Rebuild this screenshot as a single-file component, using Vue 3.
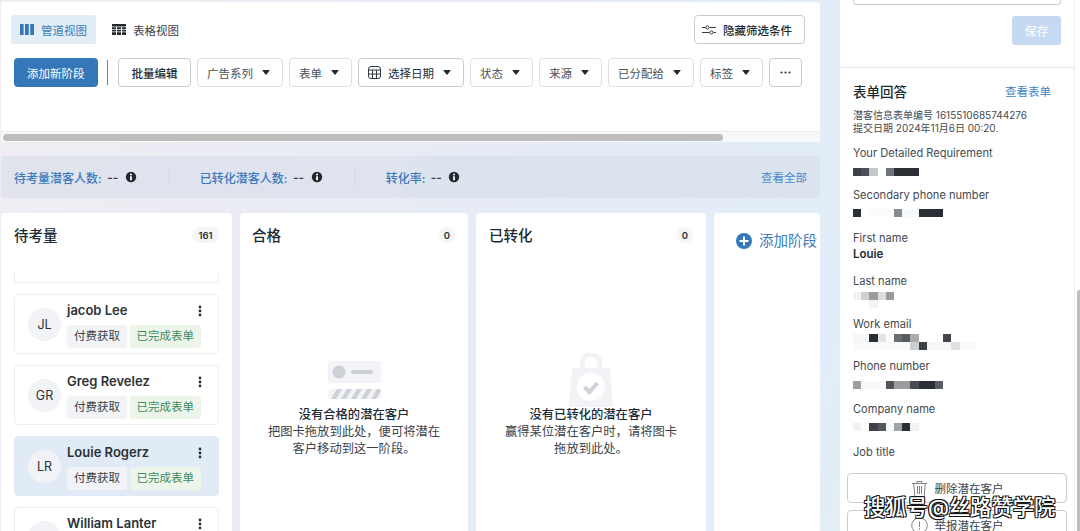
<script setup>
const filters = ["广告系列", "表单"];
const filtersAfter = ["状态", "来源", "已分配给", "标签"];
const stats = ["待考量潜客人数:", "已转化潜客人数:", "转化率:"];

const leads = [
  { initials: "JL", name: "jacob Lee" },
  { initials: "GR", name: "Greg Revelez" },
  { initials: "LR", name: "Louie Rogerz", active: true },
  { initials: "WL", name: "William Lanter" },
];

const W = "transparent";
const fields = [
  {
    label: "Your Detailed Requirement",
    gap: 7,
    rows: [[[1, "#3e4248"], [1, "#4c5056"], [1, "#c5c7ca"], [1, W], [1, "#6f7378"], [3, "#2c3035"]]],
  },
  {
    label: "Secondary phone number",
    gap: 5.5,
    rows: [[[1, "#2b3036"], [1, W], [3, "#f9fbfc"], [1, "#888b8e"], [2, "#f4fbfc"], [3, "#2a2f35"]]],
  },
  { label: "First name", text: "Louie" },
  {
    label: "Last name",
    gap: 3,
    rows: [
      [[1, "#f0f1f3"], [1, "#cfd0d2"], [1, "#9a9c9e"], [1, "#dcdddd"], [1, "#999b9d"]],
      [[2, W], [1, "#f2f3f5"]],
    ],
  },
  {
    label: "Work email",
    gap: 2,
    rows: [
      [[2, "#f6f7f8"], [1, "#2a2f35"], [1, "#e5e5e6"], [1, W], [1, "#6a6e73"], [1, "#585c61"], [1, "#aaacae"], [3, W], [1, "#43474c"]],
      [[7, "#f7f9fb"], [1, "#cccdcf"], [1, "#3c4046"], [3, "#f5f6f8"], [1, "#e0e1e2"], [2, "#f7f9fb"]],
    ],
  },
  {
    label: "Phone number",
    gap: 7,
    rows: [[[1, "#9c9ea0"], [3, "#f8f8f8"], [1, "#50545a"], [2, "#9a9ca0"], [1, "#4a4e54"], [2, "#2c3035"], [1, "#5a5e63"]]],
  },
  {
    label: "Company name",
    gap: 6,
    rows: [[[1, "#f0f2f6"], [1, W], [1, "#3e4248"], [1, "#55595e"], [1, "#f7f8f8"], [1, "#a0a2a4"], [1, "#2a2f35"], [1, "#f3f3f3"]]],
  },
  { label: "Job title" },
];
</script>

<template>
  <div class="page">
    <main class="main">
      <section class="toolbar">
        <div class="tabs">
          <div class="tab tab-active">
            <svg width="14" height="11" viewBox="0 0 14 11"><path fill="#3578b9" d="M0 0h3.600v11H0zM5 0h3.800v11H5zM10.200 0H14v11h-3.800z" /></svg>
            管道视图
          </div>
          <div class="tab">
            <svg width="14" height="11" viewBox="0 0 14 11"><path fill="#26292c" d="M0 0h14v2.400H0zM0 3.200h4v1.700H0zM5 3.200h4v1.700H5zM10 3.200h4v1.700h-4zM0 5.700h4v1.700H0zM5 5.700h4v1.700H5zM10 5.700h4v1.700h-4zM0 8.200h4V11H0zM5 8.200h4V11H5zM10 8.200h4V11h-4z" /></svg>
            表格视图
          </div>
          <button class="btn hide-btn">
            <svg width="14" height="10" viewBox="0 0 14 10" fill="none" stroke="#333a40" stroke-width="1"><path d="M0 2.500h3.500M7.500 2.500H14M0 7.500h7.500M11.500 7.500H14" /><circle cx="5.500" cy="2.500" r="1.600" /><circle cx="9.500" cy="7.500" r="1.600" /></svg>
            隐藏筛选条件
          </button>
        </div>
        <div class="filters">
          <button class="btn-primary">添加新阶段</button>
          <span class="bar"></span>
          <button class="btn batch">批量编辑</button>
          <button v-for="f in filters" :key="f" class="btn filter filter-soft">
            {{ f }}<i class="caret"></i>
          </button>
          <button class="btn filter date">
            <svg width="13" height="13" viewBox="0 0 13 13" fill="none" stroke="#33393f" stroke-width="1"><rect x="0.500" y="0.500" width="12" height="12" rx="2.500" /><path d="M0.500 4h12M0.500 8h12M4.500 4v8.500M8.500 4v8.500" /></svg>
            选择日期<i class="caret"></i>
          </button>
          <button v-for="f in filtersAfter" :key="f" class="btn filter filter-soft">
            {{ f }}<i class="caret"></i>
          </button>
          <button class="btn more">
            <svg width="11" height="3" viewBox="0 0 11 3"><circle cx="1.500" cy="1.500" r="1.100" fill="#333a40" /><circle cx="5.500" cy="1.500" r="1.100" fill="#333a40" /><circle cx="9.500" cy="1.500" r="1.100" fill="#333a40" /></svg>
          </button>
        </div>
        <div class="track"><div class="thumb"></div></div>
      </section>

      <section class="stats">
        <div v-for="s in stats" :key="s" class="stat">
          <span class="stat-label">{{ s }}</span>
          <span class="stat-value">--</span>
          <svg width="12" height="12" viewBox="0 0 12 12"><circle cx="6" cy="6" r="5.200" fill="#22272c" /><path fill="#fff" d="M5.100 5.200h1.800v4H5.100z" /><circle cx="6" cy="3.500" r="1" fill="#fff" /></svg>
        </div>
        <a class="see-all">查看全部</a>
      </section>

      <section class="board">
        <div class="col">
          <header class="col-head">
            <h2>待考量</h2>
            <span class="badge badge-wide">161</span>
          </header>
          <div class="list">
            <div class="card-stub"></div>
            <article v-for="l in leads" :key="l.name" class="card" :class="{ active: l.active }">
              <div class="avatar">{{ l.initials }}</div>
              <div class="card-body">
                <div class="name-row">
                  <span class="name">{{ l.name }}</span>
                  <svg width="4" height="12" viewBox="0 0 4 12"><circle cx="2" cy="2" r="1.400" fill="#2b3036" /><circle cx="2" cy="6" r="1.400" fill="#2b3036" /><circle cx="2" cy="10" r="1.400" fill="#2b3036" /></svg>
                </div>
                <div class="tags">
                  <span class="tag">付费获取</span>
                  <span class="tag tag-green">已完成表单</span>
                </div>
              </div>
            </article>
          </div>
        </div>

        <div class="col">
          <header class="col-head">
            <h2>合格</h2>
            <span class="badge">0</span>
          </header>
          <div class="empty">
            <div class="art">
              <svg width="53" height="38" viewBox="0 0 53 38">
                <rect width="53" height="22" rx="3" fill="#f2f3f6" />
                <circle cx="11" cy="11" r="6.500" fill="#cdd1d7" />
                <rect x="23" y="9" width="22" height="4" rx="2" fill="#cdd1d7" />
                <rect y="28" width="53" height="10" rx="3" fill="#f2f3f6" />
                <path fill="#cdd1d7" d="M3 38l6-10h5l-6 10zM13 38l6-10h5l-6 10zM23 38l6-10h5l-6 10zM33 38l6-10h5l-6 10zM43 38l6-10h3l1 2-5 8z" />
              </svg>
            </div>
            <strong>没有合格的潜在客户</strong>
            <p>把图卡拖放到此处，便可将潜在<br />客户移动到这一阶段。</p>
          </div>
        </div>

        <div class="col">
          <header class="col-head">
            <h2>已转化</h2>
            <span class="badge">0</span>
          </header>
          <div class="empty">
            <div class="art">
              <svg class="bag" width="44" height="54" viewBox="0 0 44 54">
                <path fill="none" stroke="#f2f3f6" stroke-width="5" d="M13.500 18V9.500a8.500 8.500 0 0 1 17 0V18" />
                <path fill="#f2f3f6" d="M3 15h38l3 39H0z" />
                <circle cx="22" cy="34" r="14" fill="#fff" />
                <path fill="none" stroke="#ced2d8" stroke-width="4" d="M15.500 34l5 5 8-9" />
              </svg>
            </div>
            <strong>没有已转化的潜在客户</strong>
            <p>赢得某位潜在客户时，请将图卡<br />拖放到此处。</p>
          </div>
        </div>

        <div class="col col-add">
          <svg width="16" height="16" viewBox="0 0 16 16"><circle cx="8" cy="8" r="8" fill="#3578b9" /><path fill="#fff" d="M7 3.500h2V7h3.500v2H9v3.500H7V9H3.500V7H7z" /></svg>
          <span>添加阶段</span>
        </div>
      </section>
    </main>

    <aside class="panel">
      <div class="note">
        <div class="note-box"></div>
        <div class="save-row"><button class="save">保存</button></div>
      </div>
      <div class="answers">
        <div class="answers-head">
          <h3>表单回答</h3>
          <a>查看表单</a>
        </div>
        <p class="meta">潜客信息表单编号 1615510685744276<br />提交日期 2024年11月6日 00:20.</p>
        <div class="fields">
          <div v-for="f in fields" :key="f.label" class="field">
            <div class="label">{{ f.label }}</div>
            <div v-if="f.text" class="value">{{ f.text }}</div>
            <div v-if="f.rows" :style="{ marginTop: f.gap + 'px' }">
              <div v-for="(row, i) in f.rows" :key="i" class="blur-row">
                <span
                  v-for="(b, j) in row"
                  :key="j"
                  :style="{ width: b[0] * 8.2 + 'px', background: b[1] }"
                ></span>
              </div>
            </div>
          </div>
        </div>
        <div class="actions">
          <button class="action">
            <svg width="17" height="17" viewBox="0 0 17 17" fill="none" stroke="#7c8288" stroke-width="1"><path d="M1 3.500h15M6 3.500V1.500h5v2M2.800 3.500l1 13h9.400l1-13M6.500 6v8M8.500 6v8M10.500 6v8" /></svg>
            删除潜在客户
          </button>
          <button class="action">
            <svg width="17" height="17" viewBox="0 0 17 17" fill="none" stroke="#7c8288" stroke-width="1"><circle cx="8.500" cy="8.500" r="7.800" /><path d="M8.500 4.500v5.500M8.500 11.500v1.500" /></svg>
            举报潜在客户
          </button>
        </div>
      </div>
    </aside>

    <div class="rail"><div class="rail-thumb"></div></div>
    <div class="watermark">搜狐号@丝路赞学院</div>
  </div>
</template>

<style>
html,
body {
  margin: 0;
  overflow: hidden;
}
</style>

<style scoped>
.page {
  position: relative;
  display: flex;
  width: 1080px;
  height: 531px;
  overflow: hidden;
  box-sizing: border-box;
  background: linear-gradient(105deg, #f0edf3 0%, #e6ebf5 45%, #e1edf8 75%, #e9f4ee 100%);
  font-family: Inter, "Noto Sans CJK SC", sans-serif;
  font-size: 11.5px;
  color: #1c2b33;
}

button {
  font: inherit;
  color: inherit;
  cursor: pointer;
}

.main {
  display: flex;
  flex-direction: column;
  width: 819px;
  margin-left: 1px;
  padding-top: 2px;
  flex-shrink: 0;
}

/* top toolbar */
.toolbar {
  display: flex;
  flex-direction: column;
  height: 140px;
  flex-shrink: 0;
  background: #fff;
  border-radius: 3px 3px 0 0;
  box-sizing: border-box;
  padding-top: 13px;
}

.tabs {
  display: flex;
  align-items: center;
  gap: 7px;
  height: 29px;
  padding: 0 15px 0 10px;
}

.tab {
  display: flex;
  align-items: center;
  gap: 7px;
  height: 29px;
  padding: 0 9px;
  border-radius: 3px;
  color: #3c4248;
}

.tab-active {
  background: #e2edf6;
  color: #3a7bbd;
}

.btn {
  display: flex;
  align-items: center;
  height: 29px;
  box-sizing: border-box;
  background: #fff;
  border: 1px solid #c7ccd3;
  border-radius: 4px;
}

.hide-btn {
  margin-left: auto;
  gap: 7px;
  padding: 0 12px 0 7px;
  font-weight: 500;
}

.filters {
  display: flex;
  align-items: center;
  gap: 6px;
  margin-top: 14px;
  padding-left: 13px;
}

.btn-primary {
  height: 29px;
  padding: 0 13px;
  border: none;
  border-radius: 4px;
  background: #3578b9;
  color: #fff;
}

.bar {
  width: 1.5px;
  height: 25px;
  margin: 0 4px 0 3px;
  background: #7a8086;
}

.batch {
  padding: 0 12.500px;
  font-weight: 500;
}

.filter {
  padding: 0 12px 0 9px;
}

.filter-soft {
  border-color: #dcdfe4;
  color: #4a5056;
}

.date {
  gap: 7px;
}

.caret {
  width: 0;
  height: 0;
  margin-left: 9px;
  border-left: 4px solid transparent;
  border-right: 4px solid transparent;
  border-top: 5px solid #22272c;
  border-radius: 1px;
}

.date .caret {
  margin-left: 2px;
}

.more {
  justify-content: center;
  width: 33px;
  padding: 0;
}

.track {
  margin-top: auto;
  height: 11px;
  box-sizing: border-box;
  padding: 2px 2px 0;
  background: #f8f8f8;
  border-top: 1px solid #eeeeee;
}

.thumb {
  width: 720px;
  height: 7px;
  border-radius: 4px;
  background: #bdbdbd;
}

/* stats strip */
.stats {
  display: flex;
  align-items: center;
  height: 42px;
  margin-top: 14px;
  flex-shrink: 0;
  padding: 0 13px;
  border-radius: 4px;
  background: rgba(214, 220, 232, 0.55);
}

.stat {
  display: flex;
  align-items: center;
  gap: 5.500px;
  height: 18px;
  padding-right: 32px;
  margin-right: 30px;
  border-right: 1px solid #d3d7df;
}

.stat:nth-child(3) {
  border-right: none;
}

.stat-label {
  font-size: 12px;
  font-weight: 500;
  color: #3a7bbd;
}

.stat-value {
  font-size: 12px;
  font-weight: 600;
  color: #3c4248;
  margin-right: 1px;
}

.see-all {
  margin-left: auto;
  color: #4a8acb;
}

/* board columns */
.board {
  display: grid;
  grid-template-columns: 231px 228px 230px 1fr;
  column-gap: 8px;
  flex: 1;
  min-height: 0;
  margin-top: 15px;
}

.col {
  background: #fff;
  border-radius: 4px 4px 0 0;
  overflow: hidden;
}

.col-head {
  display: flex;
  align-items: center;
  justify-content: space-between;
  height: 44px;
  padding: 0 13px;
}

.col:nth-child(2) .col-head {
  padding-left: 12px;
}

.col-head h2 {
  margin: -2px 0 0;
  font-size: 14.500px;
  font-weight: 500;
}

.badge {
  display: flex;
  align-items: center;
  justify-content: center;
  width: 16px;
  height: 16px;
  border-radius: 8px;
  background: #f3f5f8;
  font-size: 9.500px;
  font-weight: 600;
  color: #2c3238;
}

.badge-wide {
  width: 27px;
}

.list {
  padding: 13px 13px 0;
}

.card-stub {
  height: 13px;
  margin-bottom: 11px;
  border: 1px solid #eceef1;
  border-top: none;
  border-radius: 0 0 4px 4px;
  box-sizing: border-box;
}

.card {
  display: flex;
  align-items: center;
  gap: 6px;
  height: 60px;
  margin-bottom: 11px;
  box-sizing: border-box;
  padding: 0 16px 0 13px;
  border: 1px solid #eceef1;
  border-radius: 4px;
}

.card.active {
  background: #e0ebf5;
  border-color: #e0ebf5;
}

.avatar {
  display: flex;
  align-items: center;
  justify-content: center;
  width: 33px;
  height: 33px;
  flex-shrink: 0;
  border-radius: 50%;
  background: #f1f3f6;
  font-size: 12.500px;
  color: #2c3238;
}

.card-body {
  flex: 1;
  min-width: 0;
}

.name-row {
  display: flex;
  align-items: center;
  justify-content: space-between;
  height: 20px;
  margin-bottom: 4px;
}

.name {
  margin-top: -2px;
  font-size: 13px;
  font-weight: 600;
  color: #2c3238;
}

.tags {
  display: flex;
  gap: 3px;
}

.tag {
  height: 23px;
  line-height: 23px;
  padding: 0 7px;
  border-radius: 3px;
  background: #f1f3f6;
  color: #3c4248;
  white-space: nowrap;
}

.tag-green {
  padding: 0 6.500px;
  background: #edf5ea;
  color: #3c8a63;
}

.empty {
  padding-top: 104px;
  text-align: center;
  font-size: 12.300px;
  line-height: 17px;
  color: #3c4248;
}

.art {
  display: flex;
  justify-content: center;
  align-items: flex-start;
  height: 45px;
}

.bag {
  margin-top: -8px;
  flex-shrink: 0;
}

.empty strong {
  display: block;
  font-weight: 500;
  color: #1c2b33;
}

.empty p {
  margin: 0;
}

.col-add {
  display: flex;
  align-items: flex-start;
  gap: 7px;
  padding: 20px 0 0 22px;
  white-space: nowrap;
  font-size: 14.500px;
  color: #3a7bbd;
  line-height: 16px;
}

.col-add svg {
  flex-shrink: 0;
}

/* right panel */
.panel {
  width: 234px;
  margin-left: 20px;
  flex-shrink: 0;
  background: #fff;
}

.note {
  height: 68px;
  box-sizing: border-box;
  padding: 0 13px;
  border-bottom: 1px solid #e4e6e9;
}

.note-box {
  height: 5px;
  box-sizing: border-box;
  border: 1px solid #c7ccd3;
  border-top: none;
  border-radius: 0 0 4px 4px;
}

.save-row {
  display: flex;
  justify-content: flex-end;
  margin-top: 11px;
}

.save {
  width: 49px;
  height: 29px;
  border: none;
  border-radius: 3px;
  background: #c5daf2;
  color: #fff;
  font-size: 12px;
}

.answers {
  padding: 13px 13px 0;
}

.answers-head {
  display: flex;
  align-items: center;
  justify-content: space-between;
  height: 20px;
  padding-right: 10px;
}

.answers-head h3 {
  margin: 0;
  font-size: 13.500px;
  font-weight: 500;
}

.answers-head a {
  color: #3f83c7;
}

.meta {
  margin: 8px 0 0;
  font-size: 10px;
  line-height: 13px;
  color: #444a50;
}

.fields {
  margin-top: 9.500px;
}

.field {
  height: 42.800px;
}

.field:last-child {
  height: 28.400px;
}

.label {
  height: 16px;
  line-height: 16px;
  font-size: 11.100px;
  color: #444a50;
}

.value {
  line-height: 17px;
  font-size: 11.500px;
  font-weight: 600;
  color: #1c2b33;
}

.blur-row {
  display: flex;
  height: 8px;
}

.actions {
  display: flex;
  flex-direction: column;
  gap: 7px;
  margin: 1px -6px 0;
}

.action {
  display: flex;
  align-items: center;
  justify-content: center;
  gap: 7px;
  height: 30px;
  padding-right: 6px;
  background: #fff;
  border: 1px solid #c9cdd2;
  border-radius: 4px;
  color: #3c4248;
  font-size: 11.500px;
}

.rail {
  flex: 1;
  background: #fff;
  border-left: 1px solid #eeeeee;
  padding: 290px 0 0 2px;
}

.rail-thumb {
  height: 300px;
  background: #bdbdbd;
  border-radius: 2px 0 0 0;
}

.watermark {
  position: absolute;
  left: 864px;
  top: 492px;
  font-size: 21.300px;
  line-height: 30px;
  font-weight: 500;
  color: #fff;
  white-space: nowrap;
  text-shadow: 1px 1px 0 #111, -1px 1px 0 #111, 1px -1px 0 #111, -1px -1px 0 #111;
}
</style>
